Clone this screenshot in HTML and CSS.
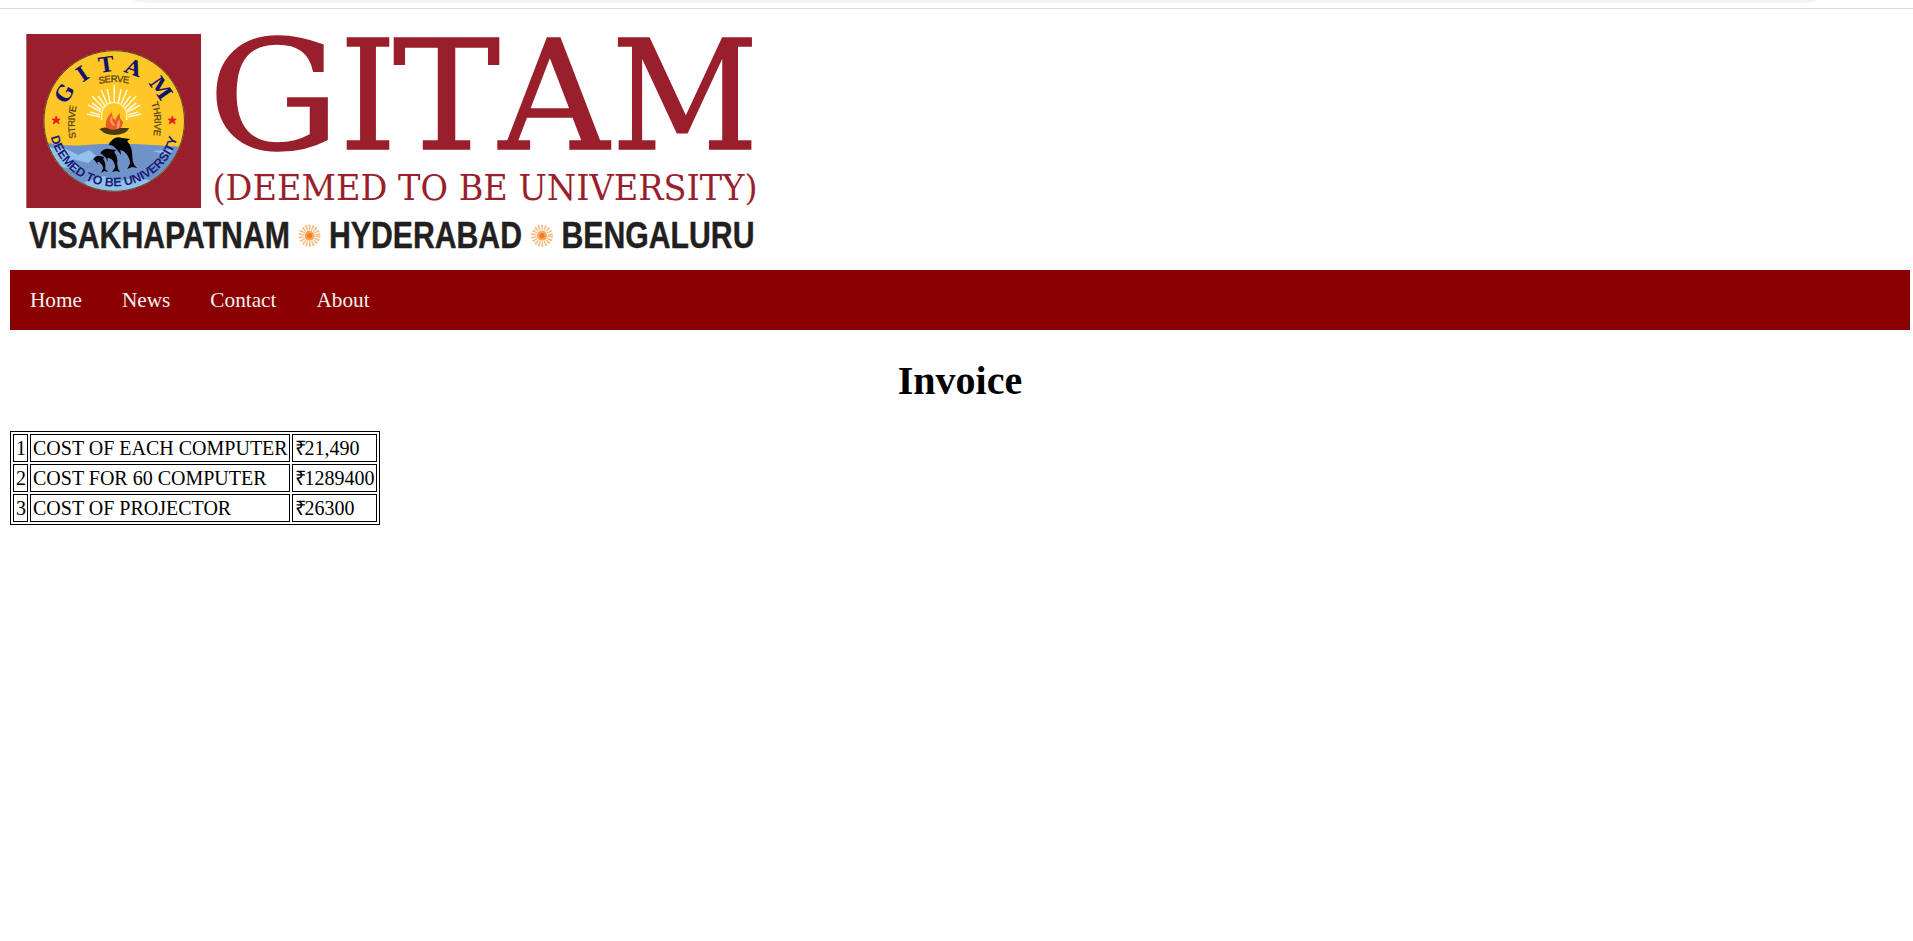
FILE: index.html
```
<!DOCTYPE html>
<html lang="en">
<head>
<meta charset="utf-8">
<title>Invoice</title>
<link rel="stylesheet" href="styles.css">
</head>
<body>
<div class="toolbar-edge"><div class="address-edge"></div></div>
<header class="brand">
<svg class="logo" width="770" height="261" viewBox="0 9 770 261" role="img" aria-label="GITAM">
  <defs>
    <clipPath id="seal"><circle r="70"/></clipPath>
    <path id="bottomArc" d="M-63.5 16A65.5 65.5 0 0 0 64 14"/>
    <path id="leftArc" d="M-38 17Q-42 -2 -36 -20"/>
    <path id="rightArc" d="M37 -18Q43 -2 38 20"/>
    <path id="topArc" d="M-15 -37Q0 -41 17 -37"/>
    <g id="burst">
      <circle r="8.2" class="burst-rays"/>
      <circle r="5" class="burst-mid"/>
      <circle r="2.7" class="burst-core"/>
    </g>
  </defs>
  <rect x="26.3" y="34" width="174.7" height="174" class="crimson"/>
  <g transform="translate(114.2 121)">
    <circle r="70.7" class="seal-base"/>
    <g clip-path="url(#seal)">
      <path class="sea" d="M-71 21Q-50 26 -28 24T18 23T71 26V72H-71Z"/>
      <path class="wave" d="M-68 26L-48 28L-36 34L-25 29L-18 35L-26 42L-42 38L-34 50L-52 46L-62 34ZM-30 61L-10 55L5 60L24 56L42 61L15 72H-20ZM38 30L60 28L54 34Z"/>
    </g>
    <circle r="70.3" class="seal-ring"/>
    <path class="long-rays" d="M0 -19V-36M-4 -18L-7 -32M4 -18L7 -32M-7 -17L-13 -31M7 -17L13 -31M-9 -15L-16 -25M9 -15L16 -25M-11 -13L-22 -25M11 -13L22 -25M-13 -11L-22 -18M13 -11L22 -18M-13 -9L-26 -16M13 -9L26 -16M-14 -6L-24 -9M14 -6L24 -9M-14 -4L-27 -7M14 -4L27 -7"/>
    <path class="sun" d="M-12.5 -1V-6A12.5 12.5 0 0 1 12.5 -6V-1"/>
    <path class="flame" d="M-8 7Q-10 -2 -2 -9Q-3 -4 1 -1Q2 -5 6 -8Q4 -3 9 1Q8 6 5 9H-5Z"/>
    <path class="flame-light" d="M-1 5Q-7 0 -2 -6Q-3 0 1 4ZM3 8Q1 5 5 -2Q7 4 4 8Z"/>
    <path class="bowl" d="M-15 8Q-8 5 -5 8Q0 10 6 7L15 7Q13 11 10 12Q0 16 -10 12Z"/>
    <path class="dolphin" d="M-5 22Q-3 20 -1 18Q3 15 8 17L16 18L13 20Q18 26 18 34Q18 40 20 44L23 47L18 46L13 48L16 42Q15 34 9 30L6 29L7 34L3 29L0 26Q-2 24 -5 24Z"/>
    <path class="dolphin" d="M-14 32Q-10 27 -5 28L2 29L0 31Q4 36 3 43L4 48L6 51L2 50L-2 51L1 46Q0 39 -5 37L-7 37L-6 41L-9 36ZM-21 38Q-18 34 -14 35L-10 36L-11 38Q-8 42 -9 48L-6 51L-10 50L-13 52L-11 47Q-12 43 -15 41L-17 41L-16 44L-19 40Z"/>
    <g class="seal-letters">
      <text transform="rotate(-61)" y="-49.5">G</text>
      <text transform="rotate(-34)" y="-49.5">I</text>
      <text transform="rotate(-8)" y="-49.5">T</text>
      <text transform="rotate(20)" y="-49.5">A</text>
      <text transform="rotate(55)" y="-49.5">M</text>
    </g>
    <g class="motto">
      <text><textPath href="#leftArc" textLength="32">STRIVE</textPath></text>
      <text><textPath href="#topArc" textLength="30">SERVE</textPath></text>
      <text><textPath href="#rightArc" textLength="33">THRIVE</textPath></text>
    </g>
    <text class="seal-title"><textPath href="#bottomArc" textLength="172">DEEMED TO BE UNIVERSITY</textPath></text>
    <path class="star" d="M-58 -5L-57 -2H-54L-56 0L-55 3L-58 1L-61 3L-60 0L-62 -2H-59ZM58 -5L59 -2H62L60 0L61 3L58 1L55 3L56 0L54 -2H57Z"/>
  </g>
  <g class="wordmark">
    <text x="208" y="149.3" textLength="132" lengthAdjust="spacingAndGlyphs">G</text>
    <text x="339.5" y="149.3" textLength="57" lengthAdjust="spacingAndGlyphs">I</text>
    <text x="393" y="149.3" textLength="107" lengthAdjust="spacingAndGlyphs">T</text>
    <text x="499" y="149.3" textLength="110" lengthAdjust="spacingAndGlyphs">A</text>
    <text x="611.5" y="149.3" textLength="147" lengthAdjust="spacingAndGlyphs">M</text>
  </g>
  <text class="subtitle" x="212.5" y="200" textLength="545" lengthAdjust="spacingAndGlyphs">(DEEMED TO BE UNIVERSITY)</text>
  <g class="cities">
    <text x="29" y="248" textLength="261" lengthAdjust="spacingAndGlyphs">VISAKHAPATNAM</text>
    <text x="329" y="248" textLength="193" lengthAdjust="spacingAndGlyphs">HYDERABAD</text>
    <text x="561.5" y="248" textLength="193" lengthAdjust="spacingAndGlyphs">BENGALURU</text>
  </g>
  <use href="#burst" x="309.5" y="235.7"/>
  <use href="#burst" x="542" y="235.7"/>
</svg>
</header>
<nav class="nav">
  <a>Home</a><a>News</a><a>Contact</a><a>About</a>
</nav>
<h1 class="title">Invoice</h1>
<table class="costs">
  <colgroup><col class="num"><col class="item"><col class="price"></colgroup>
  <tr><td>1</td><td>COST OF EACH COMPUTER</td><td><span class="rupee">₹</span>21,490</td></tr>
  <tr><td>2</td><td>COST FOR 60 COMPUTER</td><td><span class="rupee">₹</span>1289400</td></tr>
  <tr><td>3</td><td>COST OF PROJECTOR</td><td><span class="rupee">₹</span>26300</td></tr>
</table>
</body>
</html>
```
FILE: styles.css
```
* { box-sizing: border-box; }
body { margin: 0; background: #fff; color: #000; font: 20px "Liberation Serif", serif; }
.toolbar-edge { height: 9px; border-bottom: 1px solid #d9dadb; }
.address-edge { height: 3px; margin: 0 96px 0 134px; background: #f1f3f4; border-radius: 0 0 20px 20px / 0 0 3px 3px; }
.brand { height: 261px; }
.logo { display: block; overflow: visible; }
.crimson { fill: #991f2c; }
.seal-base { fill: #ffc627; }
.seal-ring { fill: none; stroke: #57422f; stroke-width: 1; }
.sea { fill: #6f93c8; }
.wave { fill: #91c1e8; }
.long-rays { fill: none; stroke: #fff6d8; stroke-width: 1.6; }
.sun { fill: #ffc627; stroke: #fff0a8; stroke-width: 1.5; }
.flame { fill: #ed5a23; }
.flame-light { fill: #fa9a5c; }
.bowl { fill: #493914; }
.dolphin { fill: #050608; }
.star { fill: #ed1c24; stroke: #ed1c24; stroke-width: 0.8; }
.seal-letters { font: bold 21px "DejaVu Serif", serif; fill: #14136b; text-anchor: middle; }
.motto { font: 9.5px "Liberation Sans", sans-serif; fill: #594716; stroke: #594716; stroke-width: 0.3; }
.seal-title { font: bold 12.5px "Liberation Sans", sans-serif; fill: #1b1b78; }
.wordmark { font: 152px "DejaVu Serif", serif; fill: #991f2c; stroke: #991f2c; stroke-width: 1.6; }
.subtitle { font: 34.5px "DejaVu Serif", serif; fill: #991f2c; }
.cities { font: bold 36px "Liberation Sans", sans-serif; fill: #231f20; stroke: #231f20; stroke-width: 0.4; }
.burst-rays { fill: none; stroke: #f9ba80; stroke-width: 5.5; stroke-dasharray: 1.6 1.3; }
.burst-mid { fill: #f8a75d; }
.burst-core { fill: #f47d20; }
.nav { display: flex; height: 60px; margin: 0 3px 0 10px; background: #8b0000; }
.nav a { padding: 0 20px; color: #f2f2f2; font-size: 21.25px; line-height: 60px; }
.title { margin: 27px 3px 27px 10px; height: 47px; font-size: 40px; line-height: 47px; text-align: center; }
.costs { table-layout: fixed; width: 370px; margin-left: 10px; border: 1px solid #000; border-collapse: separate; border-spacing: 2px; }
.costs td { height: 28px; padding: 0 2px; border: 1px solid #000; line-height: 26px; white-space: nowrap; }
.rupee { display: inline-block; width: 10px; margin-left: -0.5px; }
.num { width: 15px; }
.item { width: 260px; }
.price { width: 85px; }
```
